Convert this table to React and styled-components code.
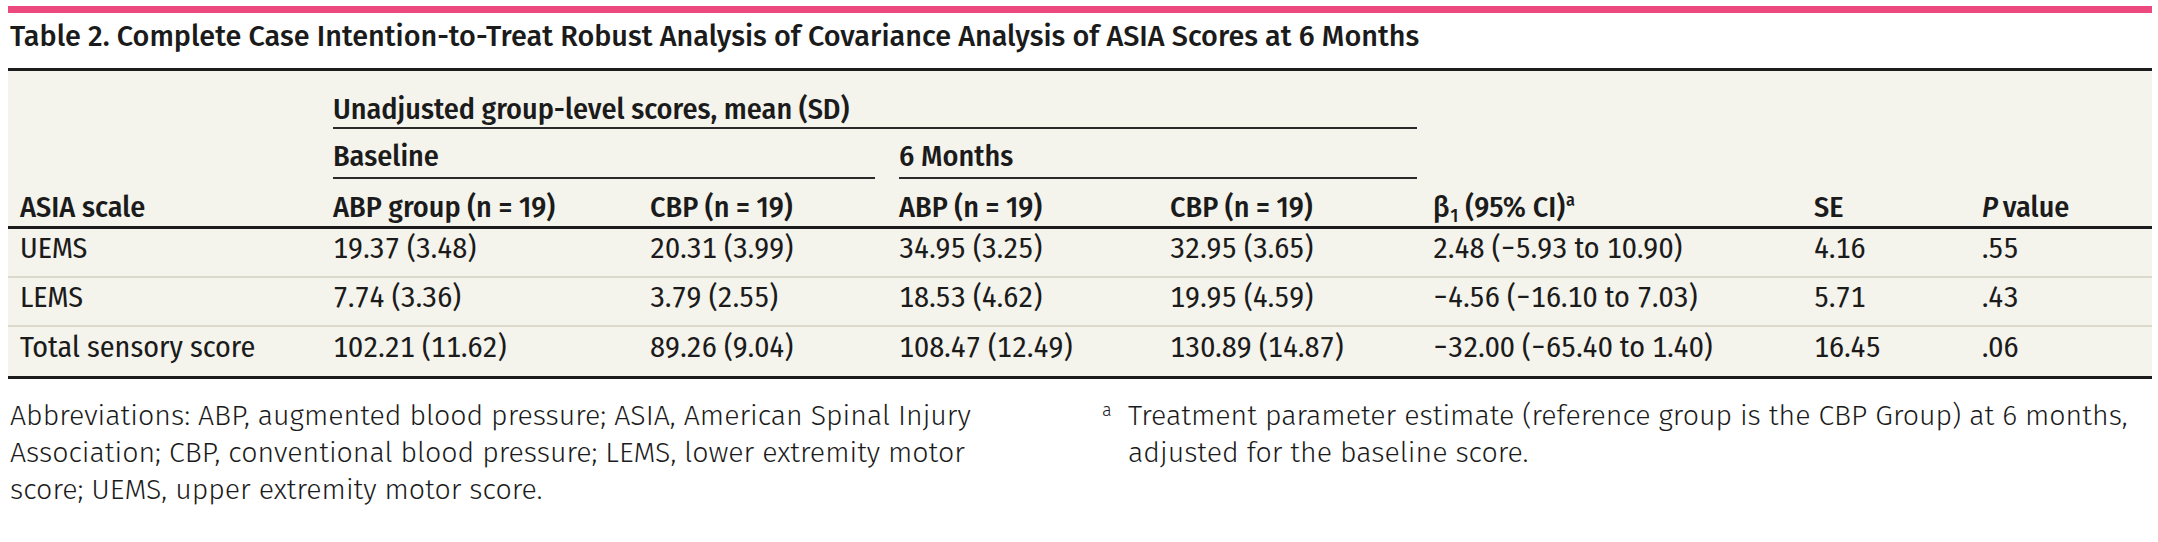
import React from "react";
import styled, { createGlobalStyle } from "styled-components";

const Global = createGlobalStyle`
  body {
    margin: 0;
    background: #ffffff;
  }
`;

const Page = styled.div`
  padding: 6px 6px 0 8px;
  color: #1b1b1b;
`;

const AccentBar = styled.div`
  height: 7px;
  background: #ec4a7f;
`;

const Caption = styled.h2`
  margin: 0;
  padding: 6px 0 13px 2px;
  font-family: "Fira Sans", "Open Sans", "Noto Sans", sans-serif;
  font-weight: 500;
  font-size: 28.8px;
  line-height: 36px;
  white-space: nowrap;
`;

const Grid = styled.div`
  display: grid;
  grid-template-columns: 325px 317px 249px 271px 263px 381px 168px 1fr;
  grid-template-rows: 58px 50px 50px 49px 49px 49px;
  background: #f4f3ec;
  border-top: 3px solid #1c1c1c;
  border-bottom: 3px solid #1c1c1c;
  font-family: "Fira Sans Condensed", "Roboto Condensed", sans-serif;
  font-size: 30px;
  line-height: 30px;
`;

const HeadBox = styled.div`
  grid-column: ${(p) => p.$col};
  grid-row: ${(p) => p.$row};
  display: flex;
  align-items: flex-end;
  padding: 0 0 ${(p) => p.$pad ?? 3}px ${(p) => (p.$first ? "12px" : "0")};
  margin-right: ${(p) => p.$gap || 0}px;
  font-weight: 500;
  white-space: nowrap;
  border-bottom: ${(p) =>
    p.$rule === "thick" ? "3px solid #1c1c1c" : p.$rule ? "2px solid #2a2a2a" : "none"};
`;

const Label = styled.span`
  display: block;
`;

const HeadCell = ({ children, ...props }) => (
  <HeadBox {...props}>
    <Label>{children}</Label>
  </HeadBox>
);

const Cell = styled.div`
  grid-column: ${(p) => p.$col};
  grid-row: ${(p) => p.$row};
  display: flex;
  align-items: center;
  padding: 0 0 10px ${(p) => (p.$first ? "12px" : "0")};
  white-space: nowrap;
  font-variant-numeric: tabular-nums;
  border-bottom: ${(p) => (p.$last ? "none" : "2px solid #dcd8cc")};
`;

const Italic = styled.i`
  font-style: italic;
  margin-right: 5px;
`;

const Sub = styled.sub`
  font-size: 19px;
  line-height: 0;
  vertical-align: -5px;
  margin: 0 7px 0 1px;
`;

const Sup = styled.sup`
  font-size: 18px;
  line-height: 0;
  vertical-align: 11px;
  margin-left: 1px;
`;

const Notes = styled.div`
  display: grid;
  grid-template-columns: 1094px 1fr;
  margin-top: 18px;
  font-family: "Fira Sans", "Open Sans", "Noto Sans", sans-serif;
  font-weight: 300;
  font-size: 28.5px;
  line-height: 37px;
`;

const NoteText = styled.p`
  margin: 0;
  padding-left: 2px;
  max-width: ${(p) => p.$width}px;
`;

const Footnote = styled.div`
  display: flex;
`;

const Marker = styled.span`
  flex: 0 0 24px;
  font-size: 18px;
  line-height: 26px;
`;

const rows = [
  ["UEMS", "19.37 (3.48)", "20.31 (3.99)", "34.95 (3.25)", "32.95 (3.65)", "2.48 (−5.93 to 10.90)", "4.16", ".55"],
  ["LEMS", "7.74 (3.36)", "3.79 (2.55)", "18.53 (4.62)", "19.95 (4.59)", "−4.56 (−16.10 to 7.03)", "5.71", ".43"],
  ["Total sensory score", "102.21 (11.62)", "89.26 (9.04)", "108.47 (12.49)", "130.89 (14.87)", "−32.00 (−65.40 to 1.40)", "16.45", ".06"],
];

const columnHeads = [
  "ASIA scale",
  "ABP group (n = 19)",
  "CBP (n = 19)",
  "ABP (n = 19)",
  "CBP (n = 19)",
  <>
    β<Sub>1</Sub>(95% CI)<Sup>a</Sup>
  </>,
  "SE",
  <>
    <Italic>P</Italic>value
  </>,
];

export default function App() {
  return (
    <Page>
      <Global />
      <AccentBar />
      <Caption>
        Table 2. Complete Case Intention-to-Treat Robust Analysis of Covariance Analysis of ASIA Scores at 6 Months
      </Caption>
      <Grid>
        <HeadCell $col="2 / 6" $row="1" $rule $gap={16} $pad={3}>
          Unadjusted group-level scores, mean (SD)
        </HeadCell>
        <HeadCell $col="2 / 4" $row="2" $rule $gap={24} $pad={6}>
          Baseline
        </HeadCell>
        <HeadCell $col="4 / 6" $row="2" $rule $gap={16} $pad={6}>
          6 Months
        </HeadCell>
        {columnHeads.map((h, i) => (
          <HeadCell key={i} $col={`${i + 1}`} $row="3" $rule="thick" $first={i === 0} $pad={4}>
            {h}
          </HeadCell>
        ))}
        {rows.map((r, ri) =>
          r.map((v, ci) => (
            <Cell
              key={`${ri}-${ci}`}
              $col={`${ci + 1}`}
              $row={`${ri + 4}`}
              $first={ci === 0}
              $last={ri === rows.length - 1}
            >
              {v}
            </Cell>
          ))
        )}
      </Grid>
      <Notes>
        <NoteText $width={1000}>
          Abbreviations: ABP, augmented blood pressure; ASIA, American Spinal Injury Association; CBP,
          conventional blood pressure; LEMS, lower extremity motor score; UEMS, upper extremity motor score.
        </NoteText>
        <Footnote>
          <Marker>a</Marker>
          <NoteText $width={1020}>
            Treatment parameter estimate (reference group is the CBP Group) at 6 months, adjusted for the
            baseline score.
          </NoteText>
        </Footnote>
      </Notes>
    </Page>
  );
}
